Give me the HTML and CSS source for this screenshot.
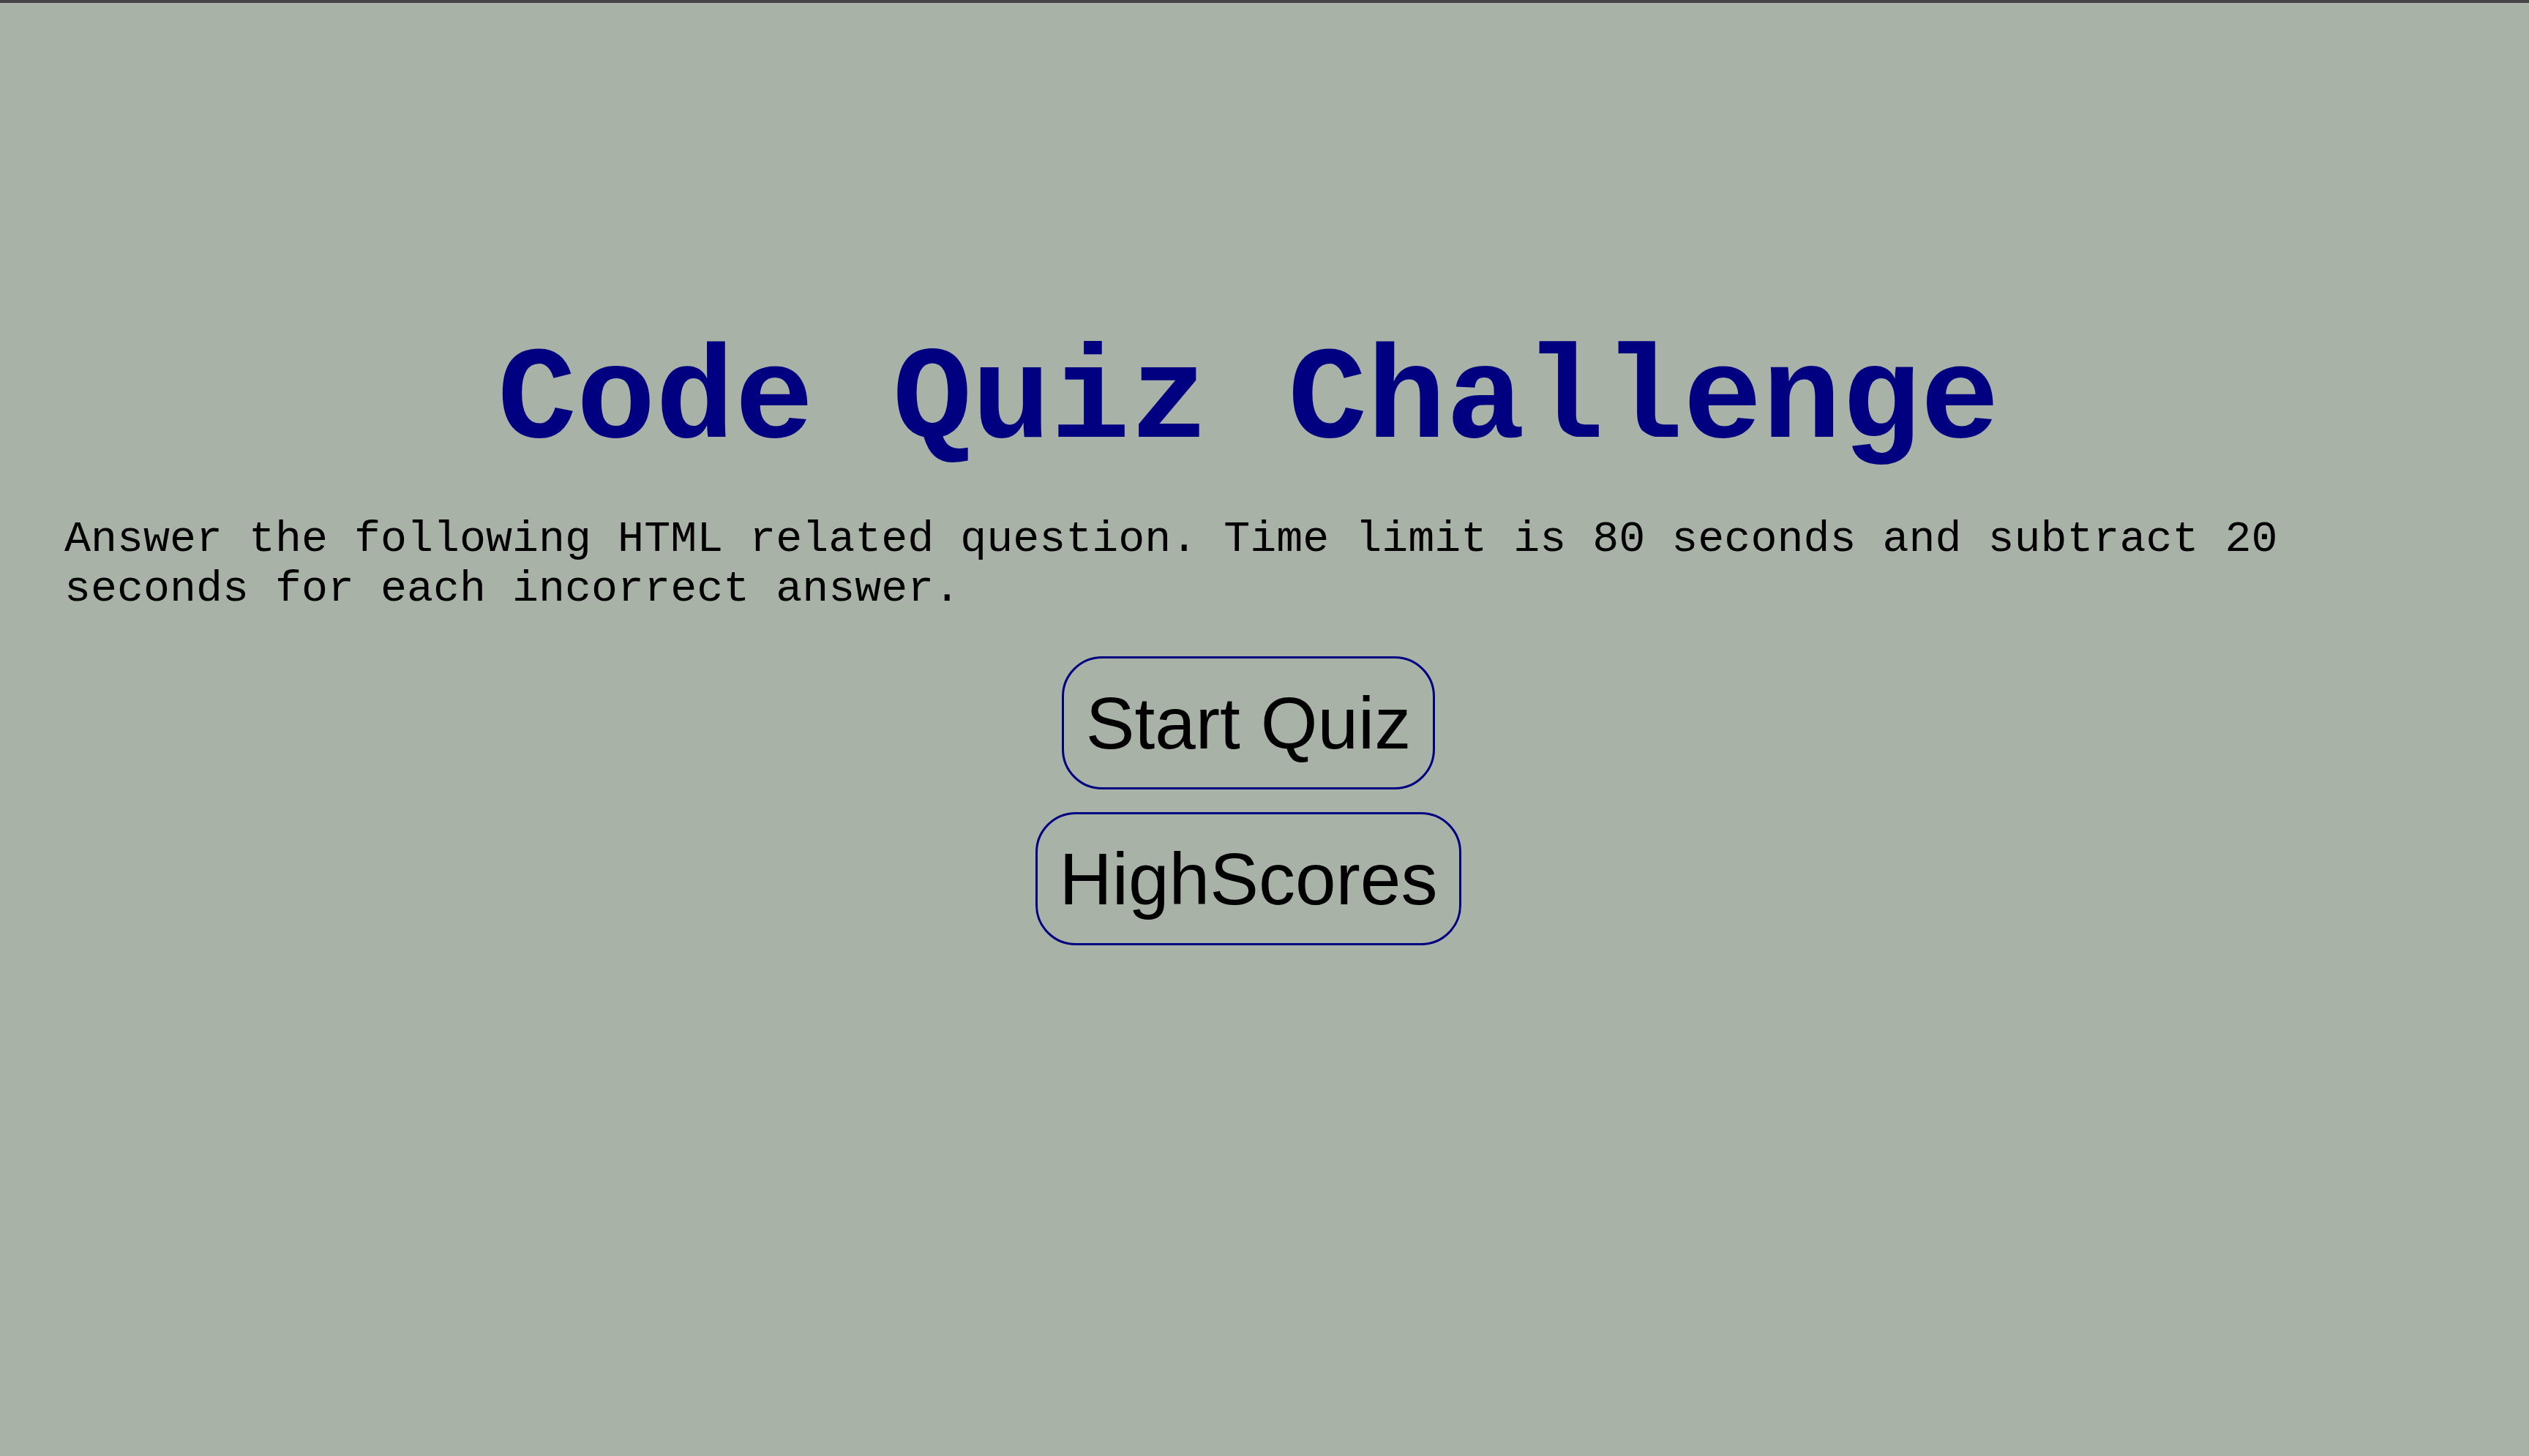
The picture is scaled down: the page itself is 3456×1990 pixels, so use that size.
FILE: index.html
```html
<!DOCTYPE html>
<html lang="en">
<head>
<meta charset="utf-8">
<title>Code Quiz Challenge</title>
<link rel="stylesheet" href="styles.css">
</head>
<body>
<main class="page">
  <h1 class="title">Code Quiz Challenge</h1>
  <p class="intro">Answer the following HTML related question. Time limit is 80 seconds and subtract 20 seconds for each incorrect answer.</p>
  <div class="actions">
    <button class="btn" type="button">Start Quiz</button>
    <button class="btn" type="button">HighScores</button>
  </div>
</main>
</body>
</html>
```
FILE: styles.css
```css
html, body {
  margin: 0;
  padding: 0;
}

body {
  background: #a8b2a7;
  border-top: 4px solid #454545;
  min-height: 1986px;
  font-family: "Liberation Mono", "Courier New", monospace;
}

.page {
  padding: 443px 60px 0 16px;
  display: flex;
  flex-direction: column;
}

.title {
  margin: 0;
  text-align: center;
  font-family: "Liberation Mono", "Courier New", monospace;
  font-weight: bold;
  font-size: 180px;
  line-height: normal;
  color: #000080;
}

.intro {
  margin: 52px 0 0 72px;
  font-size: 60px;
  line-height: normal;
  color: #000;
}

.actions {
  margin-top: 58px;
  display: flex;
  flex-direction: column;
  align-items: center;
  gap: 31px;
}

.btn {
  font-family: "Liberation Sans", Arial, sans-serif;
  font-size: 100px;
  line-height: 116px;
  color: #000;
  background: transparent;
  border: 3px solid #000080;
  border-radius: 55px;
  padding: 30px 30px;
  margin: 0;
  cursor: pointer;
}
```
